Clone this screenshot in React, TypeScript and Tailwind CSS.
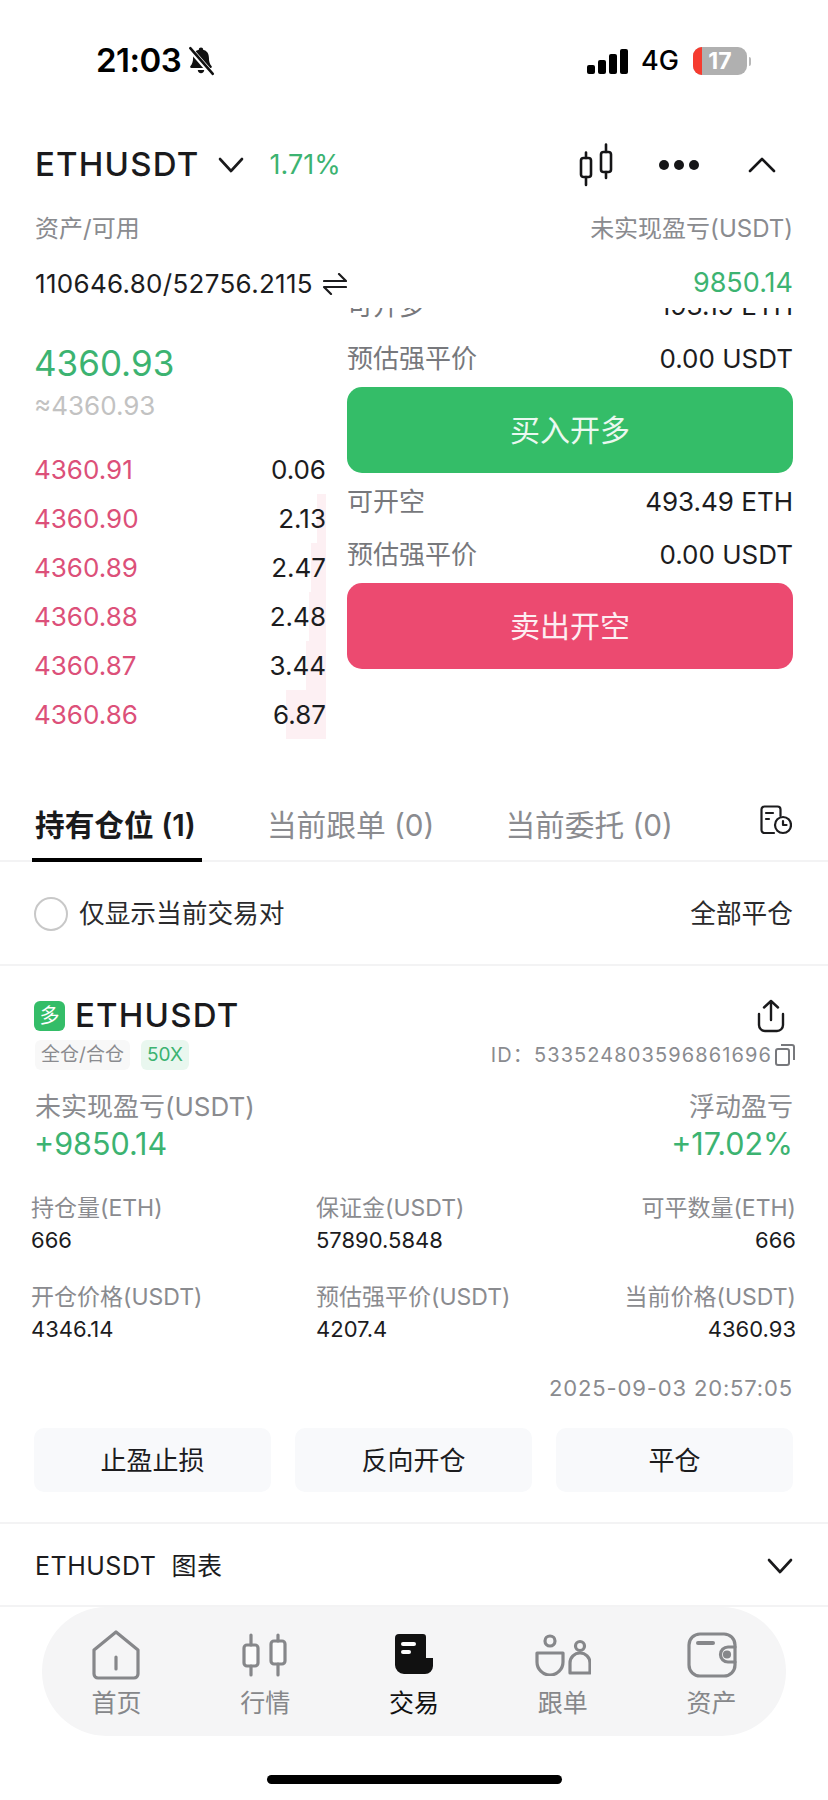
import React from "react";

const F = "font-['Inter','Noto_Sans_CJK_SC',sans-serif]";

function CandleIcon({ className }: { className?: string }) {
  return (
    <svg viewBox="0 0 35 44" className={className} fill="none" stroke="currentColor" strokeWidth="2.6" strokeLinecap="round" strokeLinejoin="round">
      <rect x="2" y="15" width="10" height="19" rx="2.5" />
      <path d="M7 9.5V15M7 34v8" />
      <rect x="22" y="9" width="10" height="20" rx="2.5" />
      <path d="M27 1.5V9M27 29v6" />
    </svg>
  );
}

function Row({ left, right, cls }: { left: string; right: string; cls: string }) {
  return (
    <div className={"flex h-[40px] shrink-0 items-center justify-between " + cls}>
      <span className="text-[26px] text-[#77787c]">{left}</span>
      <span className="text-[26px] text-[#1c1c1e]">{right}</span>
    </div>
  );
}

const asks = [
  ["4360.91", "0.06", 0],
  ["4360.90", "2.13", 9],
  ["4360.89", "2.47", 15],
  ["4360.88", "2.48", 17],
  ["4360.87", "3.44", 20],
  ["4360.86", "6.87", 40],
] as const;

function Stat({ label, value, right }: { label: string; value: string; right?: boolean }) {
  return (
    <div className={"flex flex-col " + (right ? "items-end" : "items-start")}>
      <span className="text-[23px] leading-[32px] text-[#8a8b8f]">{label}</span>
      <span className="text-[22px] leading-[32px] text-[#1c1c1e]">{value}</span>
    </div>
  );
}

function NavItem({ label, active, children }: { label: string; active?: boolean; children: React.ReactNode }) {
  return (
    <div className="flex w-[149px] flex-col items-center">
      <div className="flex h-[52px] items-center justify-center">{children}</div>
      <span className={"mt-[5px] text-[25px] leading-[34px] " + (active ? "text-[#111]" : "text-[#86878a]")}>{label}</span>
    </div>
  );
}

export default function App() {
  return (
    <div className={"flex h-[1800px] w-[828px] flex-col overflow-hidden bg-white " + F}>
      {/* status bar */}
      <div className="flex h-[122px] shrink-0 items-center justify-between pl-[96px] pr-[77px]">
        <div className="flex items-center gap-[6px]">
          <span className="text-[33px] font-semibold tracking-[-0.5px] text-black">21:03</span>
          <svg viewBox="0 0 26 28" className="h-[30px] w-[28px]" fill="#111">
            <path d="M13 1.5c1.2 0 2 .9 2 1.900 3.600.9 5.400 3.700 5.400 7.600 0 3.600.8 6 2.400 7.600.6.6.3 1.900-.8 1.900H4c-1.100 0-1.400-1.300-.8-1.900 1.600-1.600 2.400-4 2.400-7.600 0-3.900 1.800-6.700 5.400-7.600 0-1 .8-1.900 2-1.900zM10 22.500h6c0 1.800-1.300 3-3 3s-3-1.200-3-3z" />
            <path d="M3 3l20 23" stroke="#fff" strokeWidth="5" />
            <path d="M3 2l21 24" stroke="#111" strokeWidth="2.4" strokeLinecap="round" />
          </svg>
        </div>
        <div className="flex items-center">
          <div className="flex h-[25px] items-end gap-[3px]">
            <div className="h-[9px] w-[8px] rounded-[2px] bg-black" />
            <div className="h-[14px] w-[8px] rounded-[2px] bg-black" />
            <div className="h-[20px] w-[8px] rounded-[2px] bg-black" />
            <div className="h-[25px] w-[8px] rounded-[2px] bg-black" />
          </div>
          <span className="ml-[13px] text-[27px] font-medium text-black">4G</span>
          <div className="relative ml-[14px] flex h-[28px] w-[54px] items-center justify-center overflow-hidden rounded-[9px] bg-[#b0b0b0]">
            <div className="absolute bottom-0 left-0 top-0 w-[9px] bg-[#f63b2f]" />
            <span className="relative text-[23px] font-bold text-white">17</span>
          </div>
          <div className="ml-[2px] h-[9px] w-[2px] rounded-r-[2px] bg-[#b8b8b8]" />
        </div>
      </div>

      {/* header */}
      <div className="flex h-[86px] shrink-0 items-center justify-between pl-[35px] pr-[52px]">
        <div className="flex items-center">
          <span className="text-[33px] font-medium tracking-[1.2px] text-[#1a1a1c]">ETHUSDT</span>
          <svg viewBox="0 0 26 16" className="ml-[18px] h-[16px] w-[26px]" fill="none" stroke="#1a1a1c" strokeWidth="2.6" strokeLinecap="round" strokeLinejoin="round">
            <path d="M2 2l11 12L24 2" />
          </svg>
          <span className="ml-[26px] text-[27px] text-[#3cb371]">1.71%</span>
        </div>
        <div className="flex items-center">
          <CandleIcon className="h-[44px] w-[35px] text-[#151517]" />
          <div className="ml-[45px] flex gap-[5px]">
            <div className="h-[10px] w-[10px] rounded-full bg-[#151517]" />
            <div className="h-[10px] w-[10px] rounded-full bg-[#151517]" />
            <div className="h-[10px] w-[10px] rounded-full bg-[#151517]" />
          </div>
          <svg viewBox="0 0 28 16" className="ml-[49px] h-[16px] w-[28px]" fill="none" stroke="#151517" strokeWidth="2.6" strokeLinecap="round" strokeLinejoin="round">
            <path d="M2 14L14 2l12 12" />
          </svg>
        </div>
      </div>

      {/* balance */}
      <div className="mt-[3px] flex h-[36px] shrink-0 items-center justify-between px-[35px] text-[24px] text-[#8a8b8f]">
        <span>资产/可用</span>
        <span>未实现盈亏(USDT)</span>
      </div>
      <div className="mt-[12px] flex h-[49px] shrink-0 items-center justify-between px-[35px] text-[26px]">
        <div className="flex items-center text-[#1c1c1e]">
          <span className="tracking-[0.3px]">110646.80/52756.2115</span>
          <svg viewBox="0 0 24 22" className="ml-[10px] h-[22px] w-[24px]" fill="none" stroke="#1c1c1e" strokeWidth="2.2" strokeLinecap="round" strokeLinejoin="round">
            <path d="M1 8h22L16 1M23 14H1l7 7" />
          </svg>
        </div>
        <span className="text-[27px] text-[#3cb371]">9850.14</span>
      </div>

      {/* trade area */}
      <div className="flex h-[482px] shrink-0 overflow-hidden px-[35px]">
        <div className="-ml-[1px] flex w-[292px] shrink-0 flex-col">
          <span className="mt-[33px] text-[35px] leading-[44px] text-[#3cb371]">4360.93</span>
          <span className="mt-[4px] text-[26px] leading-[34px] text-[#c2c2c2]">≈4360.93</span>
          <div className="mt-[22px] flex flex-col">
            {asks.map(([p, q, w]) => (
              <div key={p} className="relative flex h-[49px] items-center justify-between text-[26px]">
                <div className="absolute bottom-0 right-0 top-0 bg-[#fdf0f3]" style={{ width: w }} />
                <span className="relative text-[#dc5079]">{p}</span>
                <span className="relative text-[#1c1c1e]">{q}</span>
              </div>
            ))}
          </div>
        </div>
        <div className="ml-[21px] flex flex-1 flex-col">
          <Row left="可开多" right="193.19 ETH" cls="-mt-[23px]" />
          <Row left="预估强平价" right="0.00 USDT" cls="mt-[13px]" />
          <div className="mt-[9px] flex h-[86px] shrink-0 items-center justify-center rounded-[15px] bg-[#34bd68] text-[30px] text-[#eaf8f0]">买入开多</div>
          <Row left="可开空" right="493.49 ETH" cls="mt-[8px]" />
          <Row left="预估强平价" right="0.00 USDT" cls="mt-[13px]" />
          <div className="mt-[9px] flex h-[86px] shrink-0 items-center justify-center rounded-[15px] bg-[#ec4a70] text-[30px] text-[#fdeef2]">卖出开空</div>
        </div>
      </div>

      {/* tabs */}
      <div className="relative flex h-[72px] shrink-0 items-center justify-between border-b-2 border-[#f3f3f4] pl-[35px] pr-[36px]">
        <div className="flex items-center text-[29.7px]">
          <span className="font-semibold text-[#1a1a1c]">持有仓位 (1)</span>
          <span className="ml-[71px] text-[#8a8b8f]">当前跟单 (0)</span>
          <span className="ml-[71px] text-[#8a8b8f]">当前委托 (0)</span>
        </div>
        <svg viewBox="0 0 32 30" className="-mt-[10px] h-[30px] w-[32px]" fill="none" stroke="#1c1c1e" strokeWidth="2.2" strokeLinecap="round" strokeLinejoin="round">
          <path d="M14 28H4.5A3 3 0 0 1 1.5 25V4.5A3 3 0 0 1 4.5 1.5h13a3 3 0 0 1 3 3V11" />
          <path d="M6 8h7M6 14h3" />
          <circle cx="23" cy="20" r="8" />
          <path d="M23 16v4h3.5" />
        </svg>
        <div className="absolute bottom-[-2px] left-[32px] h-[4px] w-[170px] bg-black" />
      </div>

      <div className="flex h-[104px] shrink-0 items-center justify-between border-b-2 border-[#f3f3f4] pl-[34px] pr-[35px] pt-[2px]">
        <div className="flex items-center">
          <div className="h-[34px] w-[34px] rounded-full border-2 border-[#c8c8c8]" />
          <span className="ml-[11px] text-[25.7px] text-[#2a2a2c]">仅显示当前交易对</span>
        </div>
        <span className="text-[25.7px] text-[#2a2a2c]">全部平仓</span>
      </div>

      {/* position */}
      <div className="flex shrink-0 flex-col border-b-2 border-[#f3f3f4] pb-[30px]">
        <div className="mt-[32px] flex h-[36px] items-center justify-between pl-[34px] pr-[43px]">
          <div className="flex items-center">
            <div className="flex h-[30px] w-[31px] items-center justify-center rounded-[6px] bg-[#34bd68] text-[20px] text-white">多</div>
            <span className="ml-[10px] text-[33px] font-medium tracking-[1.2px] text-[#1a1a1c]">ETHUSDT</span>
          </div>
          <svg viewBox="0 0 28 34" className="h-[34px] w-[28px]" fill="none" stroke="#1a1a1c" strokeWidth="2.4" strokeLinecap="round" strokeLinejoin="round">
            <path d="M14 21V2M7 8.5L14 2l7 6.5" />
            <path d="M2 15v11a6 6 0 0 0 6 6h12a6 6 0 0 0 6-6V15" />
          </svg>
        </div>
        <div className="mt-[6px] flex h-[30px] items-center justify-between pl-[35px] pr-[33px]">
          <div className="flex items-center">
            <span className="flex h-[30px] w-[95px] items-center justify-center rounded-[6px] bg-[#f8f8f8] text-[19px] text-[#8a8b8f]">全仓/合仓</span>
            <span className="ml-[11px] flex h-[30px] w-[48px] items-center justify-center rounded-[6px] bg-[#e9f7ef] text-[19px] text-[#3cb371]">50X</span>
          </div>
          <div className="flex items-center">
            <span className="text-[20px] tracking-[1.1px] text-[#8a8b8f]">ID：533524803596861696</span>
            <svg viewBox="0 0 20 22" className="ml-[3px] h-[22px] w-[20px]" fill="none" stroke="#77787c" strokeWidth="2" strokeLinejoin="round">
              <rect x="1" y="5" width="13" height="16" rx="2" />
              <path d="M6 1h11a2 2 0 0 1 2 2v13" />
            </svg>
          </div>
        </div>
        <div className="mt-[17px] flex h-[38px] items-center justify-between px-[35px] text-[26px] text-[#8a8b8f]">
          <span>未实现盈亏(USDT)</span>
          <span>浮动盈亏</span>
        </div>
        <div className="flex h-[38px] items-center justify-between pl-[34px] pr-[35px] text-[30.5px] text-[#3cb371]">
          <span>+9850.14</span>
          <span>+17.02%</span>
        </div>
        <div className="mt-[29px] grid grid-cols-[285px_1fr_1fr] gap-y-[25px] pl-[31px] pr-[32px]">
          <Stat label="持仓量(ETH)" value="666" />
          <Stat label="保证金(USDT)" value="57890.5848" />
          <Stat label="可平数量(ETH)" value="666" right />
          <Stat label="开仓价格(USDT)" value="4346.14" />
          <Stat label="预估强平价(USDT)" value="4207.4" />
          <Stat label="当前价格(USDT)" value="4360.93" right />
        </div>
        <div className="mt-[27px] flex justify-end pr-[35px] text-[22px] leading-[32px] tracking-[0.85px] text-[#8a8b8f]">2025-09-03 20:57:05</div>
        <div className="mt-[24px] flex gap-[24px] pl-[34px] pr-[35px]">
          {["止盈止损", "反向开仓", "平仓"].map((t) => (
            <div key={t} className="flex h-[64px] flex-1 items-center justify-center rounded-[10px] bg-[#f8f9fb] text-[26px] text-[#1c1c1e]">{t}</div>
          ))}
        </div>
      </div>

      {/* chart row */}
      <div className="flex h-[83px] shrink-0 items-center justify-between border-b-2 border-[#f3f3f4] px-[35px]">
        <span className="mt-[4px] text-[25px] tracking-[0.5px] text-[#1c1c1e]">ETHUSDT&nbsp; 图表</span>
        <svg viewBox="0 0 26 16" className="mt-[2px] h-[16px] w-[26px]" fill="none" stroke="#1a1a1c" strokeWidth="2.6" strokeLinecap="round" strokeLinejoin="round">
          <path d="M2 2l11 12L24 2" />
        </svg>
      </div>

      {/* nav */}
      <div className="mx-[42px] flex h-[129px] shrink-0 items-start justify-center rounded-[65px] bg-[#f5f5f6] pt-[22px]">
        <NavItem label="首页">
          <svg viewBox="0 0 48 50" className="h-[50px] w-[48px]" fill="none" stroke="#86878a" strokeWidth="3.2" strokeLinejoin="round" strokeLinecap="round">
            <path d="M24 2L46 20v24a4 4 0 0 1-4 4H6a4 4 0 0 1-4-4V20z" />
            <path d="M24 27v12" />
          </svg>
        </NavItem>
        <NavItem label="行情">
          <svg viewBox="0 0 46 44" className="h-[44px] w-[46px]" fill="#fbfbfb" stroke="#86878a" strokeWidth="3.2" strokeLinejoin="round" strokeLinecap="round">
            <rect x="2" y="12" width="14" height="21" rx="3" />
            <path d="M9 2v10M9 33v9" />
            <rect x="29" y="8" width="14" height="23" rx="3" />
            <path d="M36 2v6M36 31v11" />
          </svg>
        </NavItem>
        <NavItem label="交易" active>
          <svg viewBox="0 0 38 40" className="mb-[2px] h-[40px] w-[38px]">
            <path d="M4 0h24a3 3 0 0 1 3 3v21h7v8a8 8 0 0 1-8 8H9a9 9 0 0 1-9-9V4a4 4 0 0 1 4-4z" fill="#111" />
            <rect x="6" y="8" width="15" height="4" rx="2" fill="#fff" />
            <rect x="6" y="16" width="10" height="4" rx="2" fill="#fff" />
          </svg>
        </NavItem>
        <NavItem label="跟单">
          <svg viewBox="0 0 56 42" className="h-[42px] w-[56px]" fill="none" stroke="#86878a" strokeWidth="3.2" strokeLinejoin="round" strokeLinecap="round">
            <circle cx="15" cy="7" r="5" />
            <path d="M2 19h26v9a13 13 0 0 1-26 0z" />
            <circle cx="45" cy="12" r="4.5" />
            <path d="M35 39V29a10 10 0 0 1 20 0v10z" />
          </svg>
        </NavItem>
        <NavItem label="资产">
          <svg viewBox="0 0 50 46" className="h-[46px] w-[50px]" fill="none" stroke="#86878a" strokeWidth="3.2" strokeLinejoin="round" strokeLinecap="round">
            <rect x="2" y="2" width="46" height="42" rx="11" />
            <path d="M11 11h15" strokeWidth="4" />
            <path d="M48 15h-7a7.5 7.5 0 0 0 0 15h7" />
            <circle cx="40" cy="22.5" r="2.5" fill="#86878a" />
          </svg>
        </NavItem>
      </div>

      {/* home indicator */}
      <div className="mt-[39px] flex shrink-0 justify-center">
        <div className="h-[9px] w-[295px] rounded-full bg-black" />
      </div>
    </div>
  );
}
